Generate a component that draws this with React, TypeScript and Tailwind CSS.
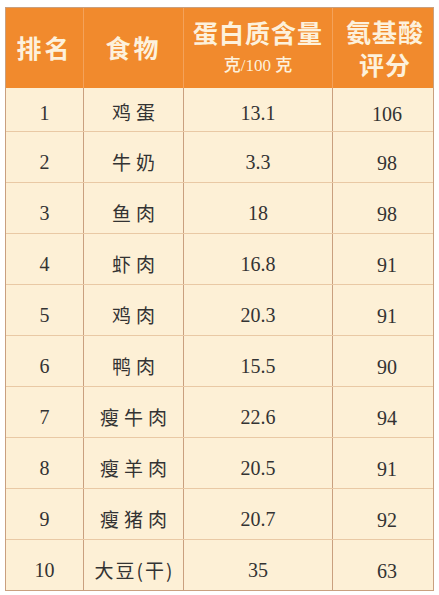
import React from "react";

const rows: [string, string, string, string][] = [
  ["1", "鸡蛋", "13.1", "106"],
  ["2", "牛奶", "3.3", "98"],
  ["3", "鱼肉", "18", "98"],
  ["4", "虾肉", "16.8", "91"],
  ["5", "鸡肉", "20.3", "91"],
  ["6", "鸭肉", "15.5", "90"],
  ["7", "瘦牛肉", "22.6", "94"],
  ["8", "瘦羊肉", "20.5", "91"],
  ["9", "瘦猪肉", "20.7", "92"],
  ["10", "大豆(干)", "35", "63"],
];

const serif = { fontFamily: '"Liberation Serif", "Noto Sans CJK SC", serif' };
const cjk = { fontFamily: '"Noto Sans CJK SC", sans-serif' };

export default function App() {
  return (
    <div className="w-[439px] h-[595px] bg-white pt-[7px] pl-[5px]">
      <div className="w-[429px] border border-[#c9a07f] bg-[#fdf0d6]">
        <div
          className="grid grid-cols-[78px_100px_149px_1fr] h-[80px] bg-[#f18a2d] text-[#fdf1dc] font-bold"
          style={cjk}
        >
          <div className="flex items-center justify-center text-[25px] tracking-[3px] border-r border-[#f4a25a]">排名</div>
          <div className="flex items-center justify-center text-[25px] tracking-[3px] border-r border-[#f4a25a]">食物</div>
          <div className="flex flex-col items-center justify-center border-r border-[#f4a25a]">
            <div className="text-[25px] tracking-[1px] leading-[30px] mt-[-2px]">蛋白质含量</div>
            <div className="text-[17px] font-medium leading-[24px] mt-[5px]">
              克<span style={serif} className="font-normal">/100 </span>克
            </div>
          </div>
          <div className="flex flex-col items-center justify-center text-[25px] tracking-[1px] leading-[33px] pl-[4px]">
            <div>氨基酸</div>
            <div>评分</div>
          </div>
        </div>
        {rows.map((r, i) => (
          <div
            key={i}
            className={`grid grid-cols-[78px_100px_149px_1fr] text-[#333] ${i === 0 ? "h-[43px]" : "h-[51px] border-t border-[#e9c9a5]"}`}
          >
            <div className={`flex items-center justify-center text-[20px] border-r border-[#c9a07f] ${i === 0 ? "pt-[6px]" : "pt-[10px]"}`} style={serif}>{r[0]}</div>
            <div
              className={`flex items-center justify-center text-[19px] whitespace-nowrap border-r border-[#c9a07f] ${i === 9 ? "tracking-[2px] pl-[2px]" : "tracking-[5px] pl-[5px]"} ${i === 0 ? "pt-[6px]" : "pt-[10px]"}`}
              style={cjk}
            >
              {r[1]}
            </div>
            <div className={`flex items-center justify-center text-[20px] border-r border-[#c9a07f] ${i === 0 ? "pt-[6px]" : "pt-[10px]"}`} style={serif}>{r[2]}</div>
            <div className={`flex items-center justify-center text-[20px] pl-[8px] ${i === 0 ? "pt-[8px]" : "pt-[12px]"}`} style={serif}>{r[3]}</div>
          </div>
        ))}
      </div>
    </div>
  );
}
